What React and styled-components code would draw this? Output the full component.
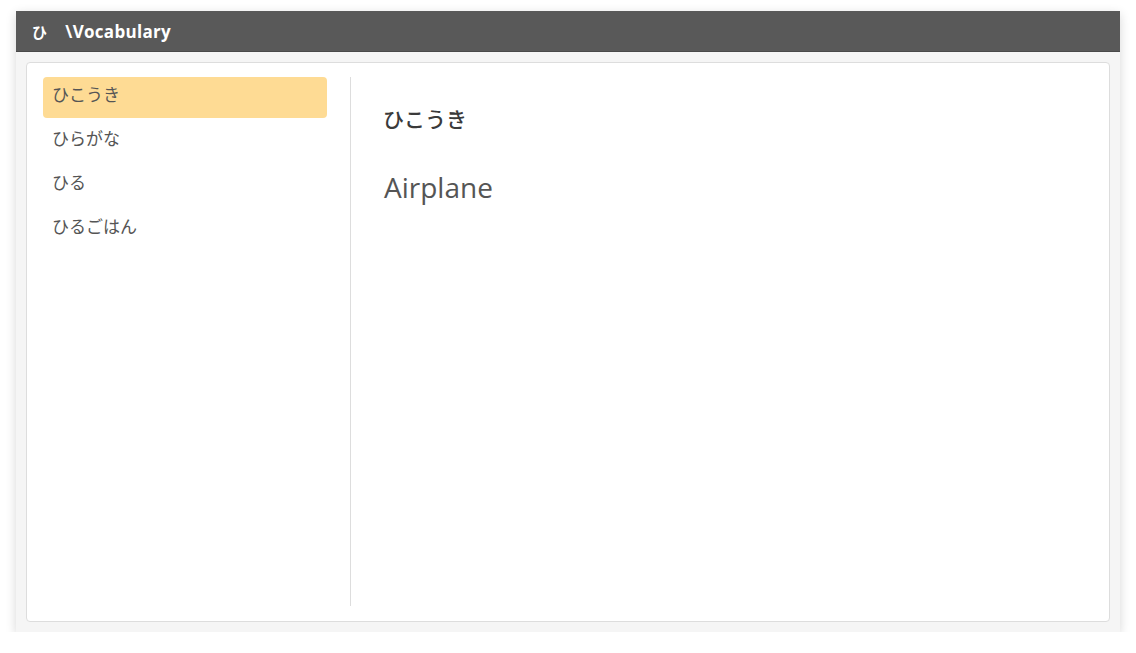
import React, { useState } from 'react';
import styled, { createGlobalStyle } from 'styled-components';

const GlobalStyle = createGlobalStyle`
  body {
    margin: 0;
    background: #ffffff;
    font-family: 'Open Sans', 'Noto Sans CJK JP', sans-serif;
  }
`;

const words = [
  { kana: 'ひこうき', meaning: 'Airplane' },
  { kana: 'ひらがな', meaning: 'Hiragana' },
  { kana: 'ひる', meaning: 'Noon' },
  { kana: 'ひるごはん', meaning: 'Lunch' },
];

const Window = styled.div`
  margin: 11px 16px 0;
  width: 1104px;
  height: 621px;
  background: #f5f5f5;
  box-shadow: 0 3px 10px rgba(0, 0, 0, 0.16);
  display: flex;
  flex-direction: column;
`;

const TitleBar = styled.header`
  height: 40px;
  flex-shrink: 0;
  background: #595959;
  color: #ffffff;
  display: flex;
  align-items: center;
  gap: 18px;
  padding-left: 16px;
  font-family: 'Open Sans', 'Noto Sans CJK JP', sans-serif;
  font-weight: 700;
  font-size: 17px;
  letter-spacing: 0.3px;
  border-bottom: 1px solid #4a4a4a;
`;

const Logo = styled.span`
  font-family: 'Noto Sans CJK JP', sans-serif;
  font-weight: 700;
  font-size: 15px;
`;

const Card = styled.main`
  flex: 1;
  margin: 10px;
  background: #ffffff;
  border: 1px solid #dddddd;
  border-radius: 4px;
  padding: 14px 16px 15px;
  display: flex;
`;

const Sidebar = styled.nav`
  width: 284px;
  padding-right: 23px;
  border-right: 1px solid #dddddd;
  display: flex;
  flex-direction: column;
  gap: 3px;
`;

const Item = styled.div`
  height: 41px;
  box-sizing: border-box;
  display: flex;
  align-items: center;
  padding: 0 0 8px 9px;
  border-radius: 4px;
  background: ${p => (p.$active ? '#fedb94' : 'transparent')};
  color: #555555;
  font-family: 'Noto Sans CJK JP', sans-serif;
  font-size: 17px;
  cursor: pointer;
`;

const Detail = styled.section`
  padding-left: 33px;
  padding-top: 24px;
  display: flex;
  flex-direction: column;
`;

const Word = styled.h2`
  margin: 0 0 0 -1px;
  font-family: 'Noto Sans CJK JP', sans-serif;
  font-weight: 500;
  font-size: 21px;
  color: #3a3a3a;
  line-height: 34px;
`;

const Meaning = styled.div`
  margin-top: 34px;
  font-family: 'Open Sans', sans-serif;
  font-size: 28px;
  color: #555555;
  line-height: 36px;
`;

export default function App() {
  const [selected, setSelected] = useState(0);
  const word = words[selected];

  return (
    <>
      <GlobalStyle />
      <Window>
        <TitleBar>
          <Logo>ひ</Logo>
          <span>\Vocabulary</span>
        </TitleBar>
        <Card>
          <Sidebar>
            {words.map((w, i) => (
              <Item key={w.kana} $active={i === selected} onClick={() => setSelected(i)}>
                {w.kana}
              </Item>
            ))}
          </Sidebar>
          <Detail>
            <Word>{word.kana}</Word>
            <Meaning>{word.meaning}</Meaning>
          </Detail>
        </Card>
      </Window>
    </>
  );
}
